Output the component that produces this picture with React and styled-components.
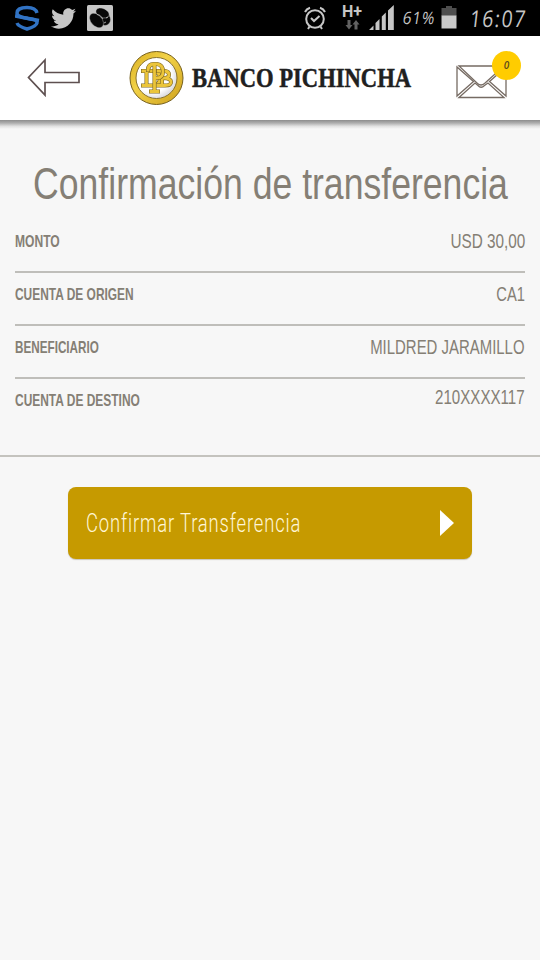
import React from 'react';
import styled, { createGlobalStyle } from 'styled-components';
import { FaTwitter } from 'react-icons/fa';

const GlobalStyle = createGlobalStyle`
  * { box-sizing: border-box; }
  body { margin: 0; background: #f7f7f7; }
`;

const Screen = styled.div`
  width: 540px;
  height: 960px;
  overflow: hidden;
  display: flex;
  flex-direction: column;
  background: #f7f7f7;
  color: #857f75;
  font-family: 'Liberation Sans', Arial, sans-serif;
`;

const Condensed = styled.span`
  display: block;
  flex: none;
  white-space: nowrap;
  transform: scaleX(${(p) => p.$scale}) skewX(${(p) => p.$skew || 0}deg);
  transform-origin: ${(p) => p.$origin || 'left'} center;
`;

const StatusBar = styled.div`
  height: 36px;
  flex: none;
  display: flex;
  justify-content: space-between;
  background: #000;
  color: #c6c6c6;
`;

const Notifications = styled.div`
  display: flex;
  align-items: center;
  gap: 11px;
  padding-left: 15px;

  svg { display: block; }
`;

const SystemIcons = styled.div`
  display: flex;
  align-items: center;
  padding-right: 12px;
`;

const Network = styled.div`
  width: 22px;
  height: 36px;
  margin-left: 15px;
  display: flex;
  flex-direction: column;
  align-items: center;
  padding-top: 3px;
  font: bold 16px/17px Roboto, sans-serif;
`;

const Signal = styled.svg`
  margin-left: 6px;
`;

const Percent = styled(Condensed)`
  width: 38px;
  margin-left: 9px;
  font: 17px/36px 'Open Sans', sans-serif;
  letter-spacing: 0.8px;
`;

const Clock = styled(Condensed)`
  width: 58px;
  margin-left: 13px;
  font: 23px/34px 'Open Sans', sans-serif;
  letter-spacing: 1.8px;
`;

const Header = styled.header`
  height: 84px;
  flex: none;
  display: flex;
  align-items: center;
  padding: 0 19px 0 27px;
  background: #fff;
`;

const HeaderShadow = styled.div`
  height: 9px;
  flex: none;
  background: linear-gradient(#8d8d8d, #b0b0b0 35%, #e2e2e2 70%, #f7f7f7);
`;

const IconButton = styled.button`
  display: block;
  border: 0;
  padding: 0;
  background: none;
  line-height: 0;
`;

const Brand = styled.div`
  width: 283px;
  margin-left: 49px;
  display: flex;
  align-items: center;
  gap: 8px;

  svg { flex: none; }
`;

const BrandName = styled(Condensed)`
  color: #202020;
  font: bold 27px/30px 'Liberation Serif', serif;
  -webkit-text-stroke: 0.5px #202020;
`;

const Mail = styled(IconButton)`
  position: relative;
  margin-left: 44px;
  padding-top: 8px;
`;

const Badge = styled.span`
  position: absolute;
  left: 36px;
  top: -6px;
  width: 29px;
  height: 29px;
  border-radius: 50%;
  background: #fc0;
  color: #5e4c1c;
  text-align: center;
  font: italic 600 10px/29px 'Open Sans', sans-serif;
`;

const Title = styled.h1`
  height: 91px;
  margin: 0;
  padding-top: 30px;
  display: flex;
  justify-content: center;
  font-size: 44px;
  line-height: 50px;
  font-weight: 400;
`;

const Details = styled.dl`
  margin: 0;
  height: 237px;
  padding: 0 15px;
  border-bottom: 2px solid #c4c3be;
`;

const Row = styled.div`
  height: 53px;
  display: flex;
  justify-content: space-between;
  border-bottom: ${(p) => (p.$last ? '0' : '2px solid #bfbeba')};
`;

const Label = styled.dt`
  width: 180px;
  padding-top: 12px;
  font-size: 17px;
  line-height: 20px;
  font-weight: 700;
`;

const Value = styled.dd`
  margin: 0;
  padding-top: ${(p) => (p.$raised ? 7 : 10)}px;
  font-size: 19.5px;
  line-height: 22px;
`;

const ConfirmButton = styled.button`
  width: 404px;
  height: 72px;
  margin: 30px auto 0;
  padding: 0 18px;
  flex: none;
  display: flex;
  align-items: center;
  justify-content: space-between;
  border: 0;
  border-radius: 8px;
  background: #c69a00;
  box-shadow: 0 1px 1px #c9c5bd;
  color: #fff6d6;
  font: 300 26px/32px Roboto, sans-serif;
  letter-spacing: 1.2px;
`;

const rows = [
  { label: 'MONTO', labelScale: 0.71, value: 'USD 30,00', valueScale: 0.785 },
  { label: 'CUENTA DE ORIGEN', labelScale: 0.702, value: 'CA1', valueScale: 0.755 },
  { label: 'BENEFICIARIO', labelScale: 0.688, value: 'MILDRED JARAMILLO', valueScale: 0.766 },
  { label: 'CUENTA DE DESTINO', labelScale: 0.703, value: '210XXXX117', valueScale: 0.775 },
];

const SecurityIcon = () => (
  <svg width="25" height="26" viewBox="0 0 25 26" fill="none" stroke="#3173c4" strokeWidth="3.4">
    <path d="M22 8C21 4 17 2.5 12 2.5C6 2.5 2 4.500 2 8C2 11 5 12 11 13L24 15.500" />
    <path d="M0 11L13 13.500C19 14.500 22 15 22 18C21.500 21 17 22.500 12 24C7 22.500 3 21 2 18" />
  </svg>
);

const AppIcon = () => (
  <svg width="26" height="26" viewBox="0 0 26 26">
    <rect width="26" height="26" rx="1.500" fill="#c6c6c6" />
    <g fill="#080808" stroke="#c6c6c6" strokeWidth=".4">
      <ellipse cx="18" cy="14.500" rx="5.500" ry="6" />
      <ellipse cx="15.500" cy="8" rx="7" ry="4.500" transform="rotate(24 15.500 8)" />
      <ellipse cx="9.500" cy="15.500" rx="8.500" ry="5.500" transform="rotate(48 9.500 15.500)" />
    </g>
    <path d="M10 9.500Q13 9 16 14M19 13L21 12M17 18L19 17" stroke="#c6c6c6" strokeWidth=".8" fill="none" />
  </svg>
);

const AlarmIcon = () => (
  <svg width="22" height="24" viewBox="0 0 22 24" fill="none" stroke="#c6c6c6" strokeWidth="2">
    <circle cx="11" cy="13" r="8.800" />
    <path d="M7 12L10 15L15.500 10M1 6Q2.500 3 6 1.800M21 6Q19.500 3 16 1.800M5.500 20.500L4 23M16.500 20.500L18 23" />
  </svg>
);

const DataArrows = () => (
  <svg width="15" height="10" viewBox="0 0 15 10" fill="#626262">
    <path d="M2.500 0H5.500V5H7.500L4 9.500L.5 5H2.500ZM9.500 9.500H12.500V4.500H14.500L11 0L7.500 4.500H9.500Z" />
  </svg>
);

const SignalIcon = () => (
  <Signal width="25" height="26" viewBox="0 0 25 26" fill="#c6c6c6">
    <path d="M0 25L4.500 20.500V25ZM6.500 25V18L10.500 14V25ZM12.800 25V11.500L16.800 7.500V25ZM19 25V5.500L24.800 0V25Z" />
  </Signal>
);

const BatteryIcon = () => (
  <svg width="16" height="24" viewBox="0 0 16 24">
    <path d="M5 0H11V2H15.500V10H.5V2H5Z" fill="#4e4e4e" />
    <path d="M.5 9.500H15.500V22.500H.5Z" fill="#c9c9c9" />
  </svg>
);

const BackIcon = () => (
  <svg width="53" height="40" viewBox="0 0 53 40" fill="none" stroke="#5e5050" strokeWidth="1.700">
    <path d="M18 2L1.500 19.500L18 37V24.500H52V14.500H18Z" />
  </svg>
);

const monogram = [
  'M14 20H24Q31 21 31 27Q31 34 24 34.500H14M17.500 20V34.500',
  'M29 20H36Q40 20.500 40 23.700Q40 27 35 27Q42 27.500 42 31Q42 34.500 36 34.500H28M33 20V34.500M33 27H36',
  'M19 19Q19 13 25 13H28Q34 14 34 20.500Q34 27 28 27H25.500M25.500 14V40M22 40.500H29',
];

const Emblem = () => (
  <svg width="55" height="55" viewBox="0 0 55 55">
    <defs>
      <linearGradient id="ring" x1="0" y1="0" x2="1" y2="1">
        <stop offset="0" stopColor="#d8ad20" />
        <stop offset=".4" stopColor="#f2d247" />
        <stop offset="1" stopColor="#cda01d" />
      </linearGradient>
      <radialGradient id="disc" cx=".4" cy=".4" r=".65">
        <stop offset=".7" stopColor="#fff" />
        <stop offset="1" stopColor="#d4d4da" />
      </radialGradient>
    </defs>
    <circle cx="27.500" cy="27" r="26.500" fill="url(#ring)" stroke="#76601f" />
    <circle cx="27.500" cy="27" r="20.500" fill="url(#disc)" stroke="#89722d" />
    <g fill="none" strokeLinecap="square">
      {monogram.map((d) => (
        <g key={d}>
          <path d={d} stroke="#7b6624" strokeWidth="4" />
          <path d={d} stroke="#ebc53a" strokeWidth="2.800" />
        </g>
      ))}
    </g>
  </svg>
);

const EnvelopeIcon = () => (
  <svg width="51" height="34" viewBox="0 0 51 34" fill="none" stroke="#766b63" strokeWidth="1.300">
    <path d="M3 1H48L28.500 18.500Q25 21.500 21.500 18.500Z" />
    <path d="M1 2V31L17.500 16.500Z" />
    <path d="M50 2V31L33.500 16.500Z" />
    <path d="M3 32.500L19 18L22 20.500Q25 24 28.500 20.500L32 18L48 32.500Z" />
  </svg>
);

const PlayArrow = () => (
  <svg width="14" height="26" viewBox="0 0 14 26" fill="#fff">
    <path d="M0 0L14 13L0 26Z" />
  </svg>
);

export default function App() {
  return (
    <Screen>
      <GlobalStyle />
      <StatusBar>
        <Notifications>
          <SecurityIcon />
          <FaTwitter size={25} />
          <AppIcon />
        </Notifications>
        <SystemIcons>
          <AlarmIcon />
          <Network>
            H+
            <DataArrows />
          </Network>
          <SignalIcon />
          <Percent $scale={0.9} $skew={-10}>61%</Percent>
          <BatteryIcon />
          <Clock $scale={0.84} $skew={-8}>16:07</Clock>
        </SystemIcons>
      </StatusBar>
      <Header>
        <IconButton aria-label="Volver"><BackIcon /></IconButton>
        <Brand>
          <Emblem />
          <BrandName $scale={0.837}>BANCO PICHINCHA</BrandName>
        </Brand>
        <Mail aria-label="Mensajes">
          <EnvelopeIcon />
          <Badge>0</Badge>
        </Mail>
      </Header>
      <HeaderShadow />
      <Title><Condensed $scale={0.809} $origin="center">Confirmación de transferencia</Condensed></Title>
      <Details>
        {rows.map((row, i) => {
          const last = i === rows.length - 1;
          return (
            <Row key={row.label} $last={last}>
              <Label><Condensed $scale={row.labelScale}>{row.label}</Condensed></Label>
              <Value $raised={last}>
                <Condensed $scale={row.valueScale} $origin="right">{row.value}</Condensed>
              </Value>
            </Row>
          );
        })}
      </Details>
      <ConfirmButton>
        <Condensed $scale={0.709}>Confirmar Transferencia</Condensed>
        <PlayArrow />
      </ConfirmButton>
    </Screen>
  );
}
